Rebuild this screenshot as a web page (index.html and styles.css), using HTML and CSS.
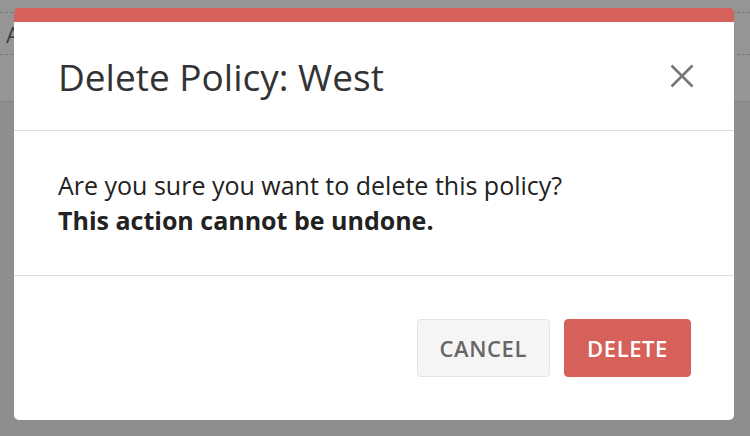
FILE: index.html
```html
<!DOCTYPE html>
<html>
<head>
<meta charset="utf-8">
<link rel="stylesheet" href="styles.css">
</head>
<body>
<div class="page">
  <div class="page-top">
    <div class="page-row"><span class="page-letter">A</span></div>
  </div>
  <div class="page-rest"></div>
</div>
<div class="modal">
  <div class="modal-header">
    <h1 class="modal-title">Delete Policy: West</h1>
    <button class="close" aria-label="Close">
      <svg width="24" height="24" viewBox="0 0 24 24"><path d="M1.5 1.5 L22.5 22.5 M22.5 1.5 L1.5 22.5" stroke="#777" stroke-width="2.6" fill="none"/></svg>
    </button>
  </div>
  <div class="modal-body">
    <p class="msg">Are you sure you want to delete this policy?</p>
    <p class="msg strong">This action cannot be undone.</p>
  </div>
  <div class="modal-footer">
    <button class="btn btn-cancel">Cancel</button>
    <button class="btn btn-delete">Delete</button>
  </div>
</div>
</body>
</html>
```
FILE: styles.css
```css
* { box-sizing: border-box; }
html, body { margin: 0; padding: 0; }
body {
  width: 750px;
  height: 436px;
  overflow: hidden;
  font-family: "Open Sans", "Liberation Sans", sans-serif;
  background: #8e8e8e;
  position: relative;
}
.page { height: 436px; display: flex; flex-direction: column; }
.page-top {
  height: 102px;
  background: #959595;
  border-bottom: 1px solid #838383;
  padding-top: 12px;
}
.page-row {
  height: 43px;
  border-top: 1px dashed #7a7a7a;
  border-bottom: 1px dashed #7a7a7a;
  display: flex;
  align-items: center;
  padding-left: 6px;
}
.page-letter { font-size: 22px; color: #3c3c3c; }
.page-rest { flex: 1; }

.modal {
  position: absolute;
  left: 14px;
  top: 8px;
  width: 720px;
  background: #fff;
  border-top: 14px solid #d6615a;
  border-radius: 5px;
}
.modal-header {
  height: 109px;
  padding: 0 40px 0 44px;
  display: flex;
  align-items: center;
  justify-content: space-between;
  border-bottom: 1px solid #dcdcdc;
}
.modal-title {
  margin: 0;
  font-size: 37px;
  font-weight: 400;
  color: #333;
}
.close {
  border: 0;
  background: none;
  padding: 0;
  width: 24px;
  height: 24px;
  display: flex;
}
.modal-body {
  height: 145px;
  padding: 0 44px;
  display: flex;
  flex-direction: column;
  justify-content: center;
  border-bottom: 1px solid #dcdcdc;
}
.msg {
  margin: 0;
  font-size: 25px;
  line-height: 35px;
  color: #222;
}
.msg.strong { font-weight: 700; }
.modal-footer {
  height: 144px;
  padding: 0 43px;
  display: flex;
  align-items: center;
  justify-content: flex-end;
  gap: 14px;
}
.btn {
  height: 58px;
  padding: 0 22px;
  font-family: "Open Sans", "Liberation Sans", sans-serif;
  font-size: 22px;
  font-weight: 600;
  letter-spacing: 0.6px;
  text-transform: uppercase;
  border-radius: 4px;
}
.btn-cancel {
  background: #f5f5f5;
  border: 1px solid #e2e2e2;
  color: #666;
}
.btn-delete {
  background: #d6615a;
  border: 1px solid #d6615a;
  color: #fff;
}
```
